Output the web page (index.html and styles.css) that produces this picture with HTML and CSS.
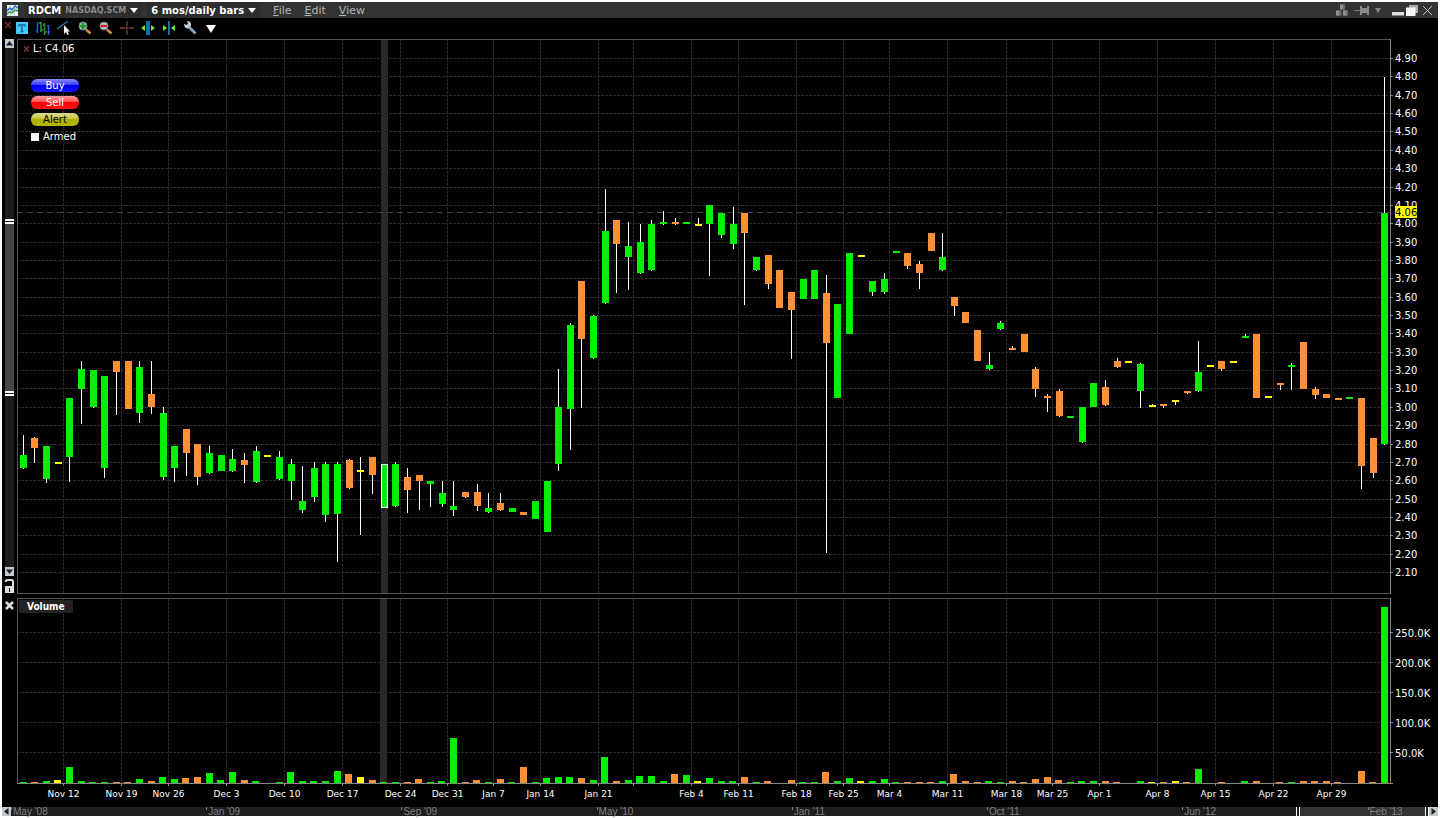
FILE: index.html
```html
<!DOCTYPE html>
<html lang="en">
  <head>
    <meta charset="UTF-8" />
    <meta name="viewport" content="width=device-width, initial-scale=1.0" />
    <title>RDCM - 6 mos/daily bars</title>
    <link rel="stylesheet" href="styles.css">
  </head>
  <body>
    <div class="window">
      <header class="titlebar">
        <svg class="app-icon" width="11" height="11" viewBox="0 0 11 11">
          <rect width="11" height="11" fill="#e8f0f4" />
          <path d="M0 3.5h11M0 6.5h11M3.5 0v11M7.5 0v11" stroke="#a9c4d4" stroke-width=".6" />
          <path d="M0 6l3-3 2 2 3-4 3 2" fill="none" stroke="#2a62c8" stroke-width="1.3" />
          <path d="M0 9l3-2 2 1 3-3 3 1" fill="none" stroke="#2a9a3a" stroke-width="1.3" />
        </svg>
        <button class="picker">RDCM <small>NASDAQ.SCM</small><i class="caret"></i></button>
        <button class="picker">6 mos/daily bars<i class="caret"></i></button>
        <nav class="menu">
          <a href="#"><u>F</u>ile</a>
          <a href="#"><u>E</u>dit</a>
          <a href="#"><u>V</u>iew</a>
        </nav>
        <div class="window-tools">
          <button aria-label="Group">
            <svg width="13" height="12" viewBox="0 0 13 12">
              <path d="M4 0h4l1 1v4l-1 1H4zM0 6h4l1.500 1v4l-1 1H0zM7 6h4l1 1v4l-1 1H7z" fill="#6c6c6c" />
              <path d="M4 1h3v4H4zM0 7h3v4H0zM7 7h3v4H7z" fill="#8f8f8f" />
            </svg>
          </button>
          <button aria-label="Pin">
            <svg width="16" height="9" viewBox="0 0 16 9">
              <path d="M0 4.500h7" stroke="#777" />
              <path d="M6 0h2v2h5V0h2v9h-2V7H8v2H6z" fill="#8a8a8a" />
            </svg>
          </button>
          <button aria-label="Options">
            <svg width="6" height="5" viewBox="0 0 6 5"><path d="M0 0h6L3 5z" fill="#888" /></svg>
          </button>
          <button class="minimize" aria-label="Minimize">
            <svg width="12" height="12" viewBox="0 0 12 12"><path d="M0 8h12v3.500H0z" fill="#ddd" /></svg>
          </button>
          <button class="restore" aria-label="Restore">
            <svg width="12" height="11" viewBox="0 0 12 11">
              <path d="M3 0h9v8H3z" fill="#aaa" />
              <path d="M0 2.500h9.500V11H0z" fill="#f4f4f4" />
            </svg>
          </button>
          <button aria-label="Close">
            <svg width="9" height="9" viewBox="0 0 9 9"><path d="M0 0l9 9M9 0L0 9" stroke="#bbb" /></svg>
          </button>
        </div>
      </header>

      <div class="toolbar">
        <button class="close-bar" aria-label="Hide toolbar">
          <svg width="6" height="6" viewBox="0 0 6 6"><path d="M0 0l6 6M6 0L0 6" stroke="#7a3030" stroke-width="1.5" /></svg>
        </button>
        <button aria-label="Text">
          <svg width="14" height="14" viewBox="0 0 14 14">
            <rect x="1" y="1" width="12" height="12" fill="#45c8fa" />
            <path d="M4 5.500V4h6v1.500M7 4v7M5.500 10.500h3" fill="none" stroke="#17688e" stroke-width="1.400" />
          </svg>
        </button>
        <button aria-label="Bars">
          <svg width="14" height="14" viewBox="0 0 14 14">
            <path d="M1.500 1v11M0 10h2M12.500 4v10M11 5h2M13 11h1" stroke="#3456d8" stroke-width="1.500" />
            <path d="M5 1v10M3 2h2M5 9h2M8.500 2v12M7 4h2M9 11h2" stroke="#2a9a3a" stroke-width="1.500" />
          </svg>
        </button>
        <button aria-label="Trend line">
          <svg width="14" height="14" viewBox="0 0 14 14">
            <path d="M0 8L11 0" stroke="#2c7fb8" stroke-width="1.200" />
            <path d="M7 4v9l2-2 1.500 3 1.500-.7-1.500-2.800H13z" fill="#f2f2f2" />
          </svg>
        </button>
        <button aria-label="Zoom in">
          <svg width="14" height="14" viewBox="0 0 14 14">
            <path d="M8 8.500l4.500 4" stroke="#c98e48" stroke-width="2.600" />
            <circle cx="5" cy="5" r="4" fill="#b9c9d2" stroke="#6f7f8a" />
            <path d="M5 2v6M2 5h6" stroke="#1c9a1c" stroke-width="2.400" />
          </svg>
        </button>
        <button aria-label="Zoom out">
          <svg width="14" height="14" viewBox="0 0 14 14">
            <path d="M8 8.500l4.500 4" stroke="#c98e48" stroke-width="2.600" />
            <circle cx="5" cy="5" r="4" fill="#b9c9d2" stroke="#6f7f8a" />
            <path d="M2 5h6" stroke="#d62020" stroke-width="2.400" />
          </svg>
        </button>
        <button aria-label="Crosshair">
          <svg width="14" height="14" viewBox="0 0 14 14">
            <path d="M7 0v5M7 9v5M0 7h5M9 7h5" stroke="#7d431b" stroke-width="1.300" />
            <path d="M6 6h2v2H6z" fill="#7d431b" />
          </svg>
        </button>
        <button aria-label="Widen bars">
          <svg width="14" height="14" viewBox="0 0 14 14">
            <path d="M5 0h4v14H5z" fill="#0c6fae" />
            <path d="M4 4v6L0 7zM10 4v6l4-3z" fill="#7be03a" />
          </svg>
        </button>
        <button aria-label="Narrow bars">
          <svg width="14" height="14" viewBox="0 0 14 14">
            <path d="M6 0h2v14H6z" fill="#0c6fae" />
            <path d="M1 4v6l4-3zM13 4v6L9 7z" fill="#7be03a" />
          </svg>
        </button>
        <button aria-label="Settings">
          <svg width="14" height="14" viewBox="0 0 14 14">
            <path d="M5 5l7.500 7.500" stroke="#8ea0b8" stroke-width="2.800" />
            <path d="M1 3l3 1 1-2-1-2c3 0 4.500 2 4 4.500L5.500 7.500C3 8 1 6 1 3z" fill="#c4ceda" />
          </svg>
        </button>
        <button aria-label="More">
          <svg width="14" height="14" viewBox="0 0 14 14"><path d="M2 4h10l-5 8z" fill="#fff" /></svg>
        </button>
      </div>

      <main class="workspace">
        <section class="row price-row">
          <div class="rail">
            <button class="step" aria-label="Scroll up"><svg width="9" height="9" viewBox="0 0 9 9"><path d="M1 6.500h7L4.500 2z" fill="#123" /></svg></button>
            <div class="track"><div class="thumb"></div></div>
            <button class="step" aria-label="Scroll down"><svg width="9" height="9" viewBox="0 0 9 9"><path d="M1 2.500h7L4.500 7z" fill="#123" /></svg></button>
            <button class="lock" aria-label="Unlock scale">
              <svg width="9" height="14" viewBox="0 0 9 14">
                <path d="M1 3V1.500L2 1h5l1 1v5" fill="none" stroke="#ddd" stroke-width="2" />
                <path d="M0 7h9v7H0z" fill="#ddd" /><path d="M4 9h1v4H4z" fill="#000" />
              </svg>
            </button>
          </div>
          <div class="pane">
            <svg id="price" class="plot"></svg>
            <div class="quote">
              <svg width="5" height="6" viewBox="0 0 5 6"><path d="M0 0l5 6M5 0L0 6" stroke="#7a3030" stroke-width="1.500" /></svg>
              L: C4.06
            </div>
            <div class="orders">
              <button class="order buy">Buy</button>
              <button class="order sell">Sell</button>
              <button class="order alert">Alert</button>
              <label class="armed"><input type="checkbox" />Armed</label>
            </div>
          </div>
        </section>

        <section class="row volume-row">
          <div class="rail">
            <button class="remove" aria-label="Remove volume">
              <svg width="9" height="9" viewBox="0 0 9 9"><path d="M1 1l7 7M8 1L1 8" stroke="#ddd" stroke-width="2.500" /></svg>
            </button>
          </div>
          <div class="pane">
            <svg id="volume" class="plot"></svg>
            <h2 class="study">Volume</h2>
          </div>
        </section>

        <section class="row date-row">
          <div class="rail"></div>
          <div class="pane"><svg id="dates" class="plot"></svg></div>
        </section>
      </main>

      <footer class="timeline">
        <button class="step" aria-label="Scroll left"><svg width="9" height="9" viewBox="0 0 9 9"><path d="M6.500 1v7L2 4.500z" fill="#123" /></svg></button>
        <div class="months">
          <div class="range"></div>
          <span>May '08</span>
          <span>Jan '09</span>
          <span>Sep '09</span>
          <span>May '10</span>
          <span>Jan '11</span>
          <span>Oct '11</span>
          <span class="short">Jun '12</span>
          <span class="last">Feb '13</span>
        </div>
        <button class="step" aria-label="Scroll right"><svg width="9" height="9" viewBox="0 0 9 9"><path d="M2.500 1v7L7 4.500z" fill="#123" /></svg></button>
      </footer>
    </div>
    <script src="chart.js"></script>
  </body>
</html>
```

FILE: styles.css
```css
* {
  box-sizing: border-box;
}
body {
  margin: 0;
  background-color: #fff;
  color: #fff;
  font-family: "DejaVu Sans", Verdana, sans-serif;
  font-size: 10px;
}
button {
  display: flex;
  align-items: center;
  margin: 0;
  padding: 0;
  border: 0;
  background: none;
  color: inherit;
  font: inherit;
}
svg {
  display: block;
  flex: none;
}
.window {
  display: flex;
  flex-direction: column;
  height: 100vh;
  min-height: 400px;
  border: 2px solid #fff;
  background-color: #000;
}

/* title bar */
.titlebar {
  display: flex;
  align-items: center;
  flex: none;
  height: 16px;
  padding: 0 6px 0 5px;
  background-color: #333;
}
.app-icon {
  margin-right: 6px;
}
.picker {
  gap: 4px;
  height: 16px;
  margin-right: 5px;
  padding: 0 4px;
  background-color: #2d2d2d;
  font-weight: bold;
}
.picker small {
  color: #8a8a8a;
  font-size: 8px;
}
.caret {
  border: 4px solid transparent;
  border-top: 5px solid #fff;
  border-bottom: 0;
}
.menu {
  display: flex;
  gap: 13px;
  margin-left: 8px;
  font-size: 11px;
}
.menu a {
  color: #b4b4b4;
  text-decoration: none;
}
.window-tools {
  display: flex;
  align-items: center;
  gap: 5px;
  margin-left: auto;
}
.minimize {
  margin-left: 6px;
}
.restore {
  margin-left: -3px;
}

/* toolbar */
.toolbar {
  display: flex;
  align-items: center;
  flex: none;
  gap: 7px;
  height: 21px;
  padding: 0 0 2px 3px;
}
.close-bar {
  align-self: flex-start;
  margin: 4px -3px 0 0;
}

/* chart panes */
.workspace {
  display: flex;
  flex-direction: column;
  flex: 1;
  min-height: 0;
}
.row {
  display: flex;
  min-height: 0;
}
.price-row {
  flex: 555 1 0;
  margin-bottom: 4px;
}
.volume-row {
  flex: 186 1 0;
}
.date-row {
  flex: none;
  height: 23px;
}
.rail {
  display: flex;
  flex-direction: column;
  flex: none;
  width: 15px;
  padding-left: 3px;
}
.pane {
  position: relative;
  flex: 1;
  min-width: 0;
}
.plot {
  width: 100%;
  height: 100%;
  overflow: visible;
}
.step {
  flex: none;
  width: 9px;
  height: 9px;
  background-color: #c8c8c8;
}
.track {
  position: relative;
  flex: 1;
  width: 9px;
  background-color: #1e1e1e;
}
.thumb {
  position: absolute;
  top: 33%;
  left: 0;
  width: 9px;
  height: 34%;
  border: 5px double #fff;
  border-width: 5px 0;
  background-color: #444;
  background-clip: padding-box;
}
.lock {
  margin: 3px 0 1px;
}
.remove {
  margin-top: 3px;
}
.quote {
  position: absolute;
  top: 4px;
  left: 7px;
  display: flex;
  align-items: center;
  gap: 4px;
}
.orders {
  position: absolute;
  top: 40px;
  left: 14px;
  display: flex;
  flex-direction: column;
  gap: 4px;
}
.order {
  justify-content: center;
  width: 48px;
  height: 13px;
  border-radius: 6px;
}
.buy {
  background: linear-gradient(#8c8cff, #3c3cff 45%, #0000f0 50%, #1414ff);
}
.sell {
  background: linear-gradient(#ff9c9c, #ff5050 45%, #f80000 50%, #ff1414);
}
.alert {
  background: linear-gradient(#dcdc96, #c4c43c 45%, #b0b000 50%, #b4b400);
  color: #000;
}
.armed {
  display: flex;
  align-items: center;
  gap: 4px;
  height: 13px;
}
.armed input {
  appearance: none;
  width: 8px;
  height: 8px;
  margin: 0;
  background-color: #f4f4f4;
}
.study {
  position: absolute;
  top: 2px;
  left: 2px;
  margin: 0;
  padding: 0 8px;
  background-color: #222;
  font: bold 10px/13px "DejaVu Sans Condensed", Tahoma, sans-serif;
}

/* drawn by chart.js */
.plot rect,
.plot path {
  shape-rendering: crispEdges;
}
.grid {
  fill: none;
  stroke: #2a2a2a;
  stroke-dasharray: 3 1;
}
.last-price {
  fill: none;
  stroke: #444;
  stroke-dasharray: 6 4;
}
.frame {
  fill: none;
  stroke: #555;
}
.axis {
  fill: none;
  stroke: #888;
}
.cursor {
  fill: #292929;
}
.wick {
  fill: #fff;
}
.g {
  fill: #00f000;
}
.o {
  fill: #ff9036;
}
.y {
  fill: #ffff00;
}
.selected {
  stroke: #fff;
}
.label {
  fill: #fff;
}
.date {
  font-size: 9px;
  text-anchor: middle;
}
.tag {
  fill: #ffff00;
}
.tag-text {
  fill: #000;
}

/* timeline */
.timeline {
  display: flex;
  flex: none;
  height: 9px;
}
.months {
  position: relative;
  display: flex;
  flex: 1;
  background-color: #1e1e1e;
  color: #808080;
  font-family: "Liberation Sans", Arial, sans-serif;
  line-height: 9px;
}
.months span {
  position: relative;
  flex: 195 1 0;
  padding-left: 2px;
  white-space: nowrap;
}
.months span::before {
  content: "";
  position: absolute;
  top: 0;
  left: 0;
  width: 1px;
  height: 3px;
  background-color: #808080;
}
.months .short {
  flex-grow: 185;
}
.months .last {
  flex-grow: 60;
}
.range {
  position: absolute;
  top: 0;
  right: 0;
  bottom: 0;
  width: 9.4%;
  border: 4px double #fff;
  border-width: 0 4px;
  background-color: #333;
  background-clip: padding-box;
}
```

FILE: chart.js
```js
// one entry per bar: colour, high, open/close top, open/close bottom, low, volume
// heights are in units of the pane (555 for price, 186 for volume)
const bars = `
g 435 455 468 469 1|o 437 438 448 463 1|g 446 446 479 483 2|y 462 462 464 464 3|g 398 398 457 482 16
g 361 369 389 424 2|g 370 370 407 408 1|g 376 376 468 478 1|o 361 361 372 415 1|o 361 361 409 409 1
g 361 367 413 423 4|o 361 394 407 414 2|g 407 413 477 480 6|g 446 446 468 482 4|o 429 429 453 476 5
o 444 444 477 485 6|g 446 453 473 474 10|g 455 455 471 471 3|g 449 459 471 472 11|o 453 460 465 483 3
g 446 451 482 483 2|y 455 455 457 457 0|g 451 457 479 480 1|g 459 464 481 500 11|g 466 501 510 513 2
g 462 468 497 502 2|g 462 464 515 522 2|g 462 464 514 562 12|o 459 460 488 489 9|y 457 470 472 535 6
o 457 457 475 494 3|g 464 464 508 508 1|g 462 464 506 507 1|o 468 477 490 513 1|o 475 475 481 510 4
g 481 481 484 507 1|g 481 493 504 507 2|g 481 506 510 516 45|o 492 492 497 498 1|o 484 492 506 511 3
g 493 508 512 513 1|o 493 503 510 511 4|g 508 508 512 512 1|o 512 512 515 515 16|g 501 501 519 519 1
g 481 481 532 532 5|g 369 407 464 471 6|g 323 325 409 450 6|o 281 281 339 408 5|g 315 316 358 359 3
g 189 231 303 304 26|o 220 220 244 293 2|g 222 246 257 290 3|g 224 242 273 274 7|g 220 224 270 271 7
g 211 222 224 225 2|o 218 222 224 225 9|g 222 222 224 224 8|y 218 224 226 226 2|g 205 205 224 276 5
g 213 213 235 238 2|g 207 224 244 249 2|o 213 213 233 305 6|g 257 257 270 271 1|o 255 255 284 289 2
o 270 270 308 308 0|o 292 292 310 359 3|g 279 279 299 299 1|g 270 270 299 299 1|o 275 293 343 553 11
g 304 304 398 398 2|g 253 253 334 334 5|y 255 255 257 257 2|g 281 281 292 296 2|g 273 279 292 294 4
g 251 251 253 253 1|o 253 253 266 269 1|o 261 264 273 289 1|o 233 233 251 251 1|g 233 257 270 271 2
o 297 297 306 316 9|o 312 312 323 323 2|o 330 330 361 361 1|g 352 365 369 370 2|g 321 323 329 330 1
o 346 348 350 350 2|o 334 334 352 352 1|o 367 369 389 397 4|o 394 396 398 412 6|o 389 391 416 417 3
g 416 416 418 418 1|g 407 407 442 443 2|g 383 383 407 407 2|o 380 387 405 406 2|o 358 361 367 368 1
y 361 361 363 363 0|g 363 364 391 408 2|y 404 405 407 407 1|o 404 404 406 408 1|y 400 400 402 405 2
o 391 391 393 394 1|g 341 372 391 392 14|y 365 365 367 367 0|o 361 361 369 371 1|y 361 361 363 363 0
g 334 336 338 338 2|o 334 334 398 398 2|y 396 396 398 398 0|o 383 383 385 390 1|g 363 365 367 390 1
o 342 342 389 389 2|o 387 389 395 399 2|o 394 394 398 398 2|o 398 398 400 400 1|g 397 397 399 399 0
o 398 398 466 489 12|o 438 438 473 478 1|g 77 213 444 445 176`
  .trim()
  .split(/[\n|]/)
  .map((row) => row.split(" "))
  .map(([color, ...n]) => [color, ...n.map(Number)]);

// first bar of each week
const weeks = [
  [4, "Nov 12"], [9, "Nov 19"], [13, "Nov 26"], [18, "Dec 3"], [23, "Dec 10"],
  [28, "Dec 17"], [33, "Dec 24"], [37, "Dec 31"], [41, "Jan 7"], [45, "Jan 14"],
  [50, "Jan 21"], [53, ""], [58, "Feb 4"], [62, "Feb 11"], [67, "Feb 18"],
  [71, "Feb 25"], [75, "Mar 4"], [80, "Mar 11"], [85, "Mar 18"], [89, "Mar 25"],
  [93, "Apr 1"], [98, "Apr 8"], [103, "Apr 15"], [108, "Apr 22"], [113, "Apr 29"],
];

const AXIS = 48;
const TOP = 39;
const SELECTED = 31;

function rect(cls, x, y, w, h) {
  return `<rect class="${cls}" x="${x}" y="${y}" width="${w}" height="${h}" />`;
}
function path(cls, d) {
  return `<path class="${cls}" d="${d}" />`;
}
function text(cls, x, y, s) {
  return `<text class="label ${cls}" x="${x}" y="${y}">${s}</text>`;
}

function draw() {
  const price = document.getElementById("price");
  const volume = document.getElementById("volume");
  const dates = document.getElementById("dates");
  const w = Math.round(price.getBoundingClientRect().width) - AXIS;
  const ph = Math.round(price.getBoundingClientRect().height);
  const vh = Math.round(volume.getBoundingClientRect().height);
  const step = (w - 11.5) / (bars.length - 1);
  const barX = (i) => Math.round(2.86 + step * i);
  const volumeX = (i) => Math.round(2.5 + step * i);
  const weekX = (i) => Math.round(5.2 + step * (i - 0.5)) + 0.5;
  const py = (v) => Math.round(((v - TOP) * ph) / 555);
  const vy = (v) => Math.round((v * vh) / 186);

  let grid = "";
  let ticks = "";
  let labels = "";
  for (let i = 0; i <= 28; i++) {
    const y = py(58 + i * 18.36) + 0.5;
    grid += `M0 ${y}H${w}`;
    ticks += `M${w} ${y}h3`;
    labels += text("", w + 5, y + 3.5, (4.9 - i / 10).toFixed(2));
  }
  let columns = "";
  weeks.forEach(([i]) => (columns += `M${weekX(i)} 0V`));
  const last = py(212);
  let candles = "";
  bars.forEach(([c, hi, top, bottom, lo], i) => {
    const x = barX(i);
    candles += rect("wick", x + 3, py(hi), 1, py(lo) - py(hi));
    if (i === SELECTED) {
      candles += rect(c + " selected", x + 0.5, py(top) + 0.5, 6, py(bottom) - py(top) - 1);
    } else {
      candles += rect(c, x, py(top), 7, py(bottom) - py(top));
    }
  });
  price.innerHTML =
    path("grid", grid + columns.replace(/V/g, "V" + ph)) +
    rect("cursor", barX(SELECTED), 1, 7, ph - 2) +
    path("last-price", `M0 ${last + 0.5}H${w}`) +
    path("frame", `M${w} .5H.5V${ph - 0.5}H${w}`) +
    path("axis", `M${w + 0.5} 0V${ph}` + ticks) +
    candles +
    labels +
    rect("tag", w + 5, last - 6, 22, 12) +
    text("tag-text", w + 5, last + 4, "4.06");

  grid = ticks = labels = "";
  for (let i = 0; i < 5; i++) {
    const y = vy(34 + i * 30) + 0.5;
    grid += `M0 ${y}H${w}`;
    ticks += `M${w} ${y}h3`;
    labels += text("", w + 5, y + 4.5, 250 - i * 50 + ".0K");
  }
  let volumes = "";
  bars.forEach(([c, , , , , v], i) => {
    if (v) volumes += rect(c, volumeX(i), vh - 1 - vy(v), 7, vy(v));
  });
  weeks.forEach(([i]) => (ticks += `M${weekX(i)} ${vh}v2`));
  volume.innerHTML =
    path("grid", grid + columns.replace(/V/g, "V" + vh)) +
    rect("cursor", volumeX(SELECTED), 1, 7, vh - 2) +
    path("frame", `M${w} .5H.5V${vh}`) +
    path("axis", `M${w + 0.5} 0V${vh}M0 ${vh - 0.5}H${w + 3}` + ticks) +
    volumes +
    labels;

  dates.innerHTML = weeks.map(([i, s]) => text("date", weekX(i), 13, s)).join("");
}

draw();
window.addEventListener("resize", draw);
```
